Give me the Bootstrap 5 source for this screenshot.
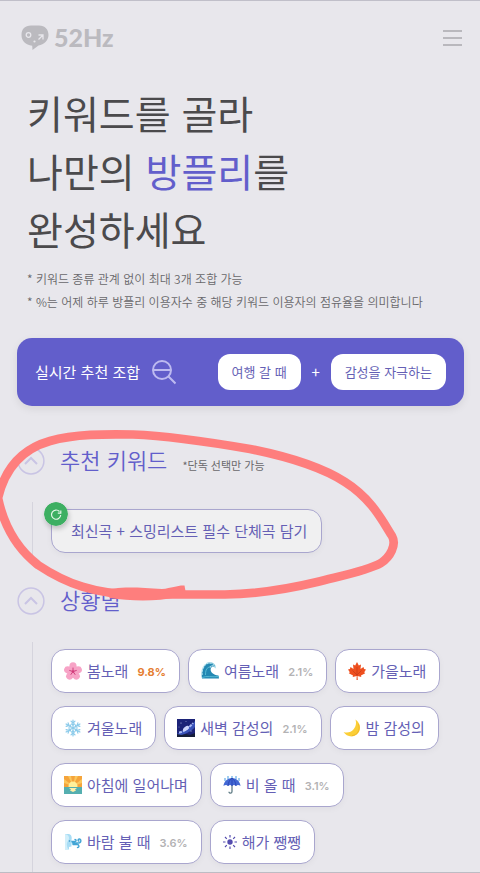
<!DOCTYPE html>
<html lang="ko">
<head>
<meta charset="utf-8">
<meta name="viewport" content="width=device-width, initial-scale=1">
<title>52Hz</title>
<link href="https://cdn.jsdelivr.net/npm/bootstrap@5.3.0/dist/css/bootstrap.min.css" rel="stylesheet">
<style>
:root { --brand: #625ecb; --chip-ink: #655fb5; }
html { overflow: hidden; }
body { background: #e8e7ec; color: #4b4a4c; font-family: "Noto Sans CJK KR", "Noto Sans", sans-serif; font-size: 15px; }
.page { position: relative; min-height: 100vh; border-top: 1px solid #c0bfc9; overflow: hidden; padding: 0 16px 8px 17px; }
.topbar { height: 73px; padding: 0; }
.brand-name { font: 900 25px/28px Lato, sans-serif; color: #bbbabf; padding: 0 0 2px 1px; }
.menu-btn { width: 22px; height: 24px; }
.headline { font-size: 39px; line-height: 58px; font-weight: 400; margin: 9px 0 10px 10px; color: #4b4a4c; }
.headline em { font-style: normal; color: var(--brand); }
.notes { font-size: 12px; line-height: 23px; font-weight: 350; color: #69686b; margin: 0 0 25px 10px; }
.combo { background: var(--brand); border-radius: 15px; padding: 16px 18px; box-shadow: 0 3px 8px #00000014; margin-bottom: 41px; color: #fff; }
.combo-title { font-size: 15px; line-height: 20px; }
.pill { height: 36px; border: 0; border-radius: 12px; background: #fff; color: var(--chip-ink); font-size: 13px; line-height: 20px; padding: 0 14px; }
.plus { width: 30px; text-align: center; }
.sect-head { height: 28px; margin-bottom: 27px; gap: 15px; }
.sect-head h2 { font-size: 22px; line-height: 26px; font-weight: 350; color: var(--brand); padding-bottom: 4px; }
.sect-head p { font-size: 11px; line-height: 20px; color: #69686b; padding-top: 7px; }
.fold { width: 28px; height: 28px; }
.sect-body { border-left: 1px solid #d5d4dd; margin-left: 15px; padding: 7px 0 9px 18px; margin-bottom: 25px; }
.chips { gap: 13px 8px; }
.chip { position: relative; height: 44px; border: 1px solid #a9a6ce; border-radius: 14px; background: #fff; color: var(--chip-ink); font-size: 15px; line-height: 22px; padding: 0 13px 1px 12px; box-shadow: 0 2px 6px #0000000a; white-space: nowrap; }
.chip svg { width: 18px; height: 18px; margin-right: 5px; flex: none; }
.chip .sun { width: 14px; }
.chip .share { font: 600 11px/22px Inter, sans-serif; color: #b3b2b4; margin-left: 9px; padding-top: 2px; }
.chip .share.hot { color: #e57e32; font-weight: 700; }
.chip-solo { background: #f0f0f1; padding: 0 14px 1px 19px; }
.chip-solo .refresh { position: absolute; left: -8px; top: -8px; width: 24px; height: 24px; margin: 0; border-radius: 50%; box-shadow: 1px 3px 5px #0003; }
.marker { position: absolute; left: 0; top: -1px; width: 480px; height: 640px; pointer-events: none; }
.baseline { position: fixed; left: 0; right: 0; bottom: 0; height: 1px; background: #bdbcc4; }
</style>
<script src="https://cdn.jsdelivr.net/npm/bootstrap@5.3.0/dist/js/bootstrap.bundle.min.js"></script>
</head>
<body>
<div class="page">
  <nav class="navbar topbar d-flex justify-content-between align-items-center flex-nowrap">
    <a href="#" class="d-flex align-items-center text-decoration-none ps-1" aria-label="52Hz">
      <svg class="me-1" width="28" height="26" viewBox="0 0 28 26" aria-hidden="true">
        <path d="M10 .5h8c6 0 9.500 4 9.500 9.500s-4.500 9.500-10 10.500L11.500 25l-.3-4.200C4.500 20 .5 16 .5 10S4 .5 10 .5z" fill="#bbbabf"/>
        <g fill="none" stroke="#e8e7ec" stroke-width="1.300"><circle cx="7.500" cy="10" r="2.300"/><path d="M17.500 10h4.500v4.500M22 10l-4.500 4.500"/></g><circle cx="13.500" cy="16.500" r="1.100" fill="#e8e7ec"/>
      </svg>
      <span class="brand-name">52Hz</span>
    </a>
    <button type="button" class="btn menu-btn p-0 border-0 d-flex align-items-center justify-content-center" aria-label="메뉴">
      <svg width="20" height="18" viewBox="0 0 20 18"><path d="M0 2h19M0 9h19M0 16h19" stroke="#b9b8bd" stroke-width="2"/></svg>
    </button>
  </nav>

  <main>
    <h1 class="headline">키워드를 골라<br>나만의 <em>방플리</em>를<br>완성하세요</h1>
    <p class="notes">* 키워드 종류 관계 없이 최대 3개 조합 가능<br>* %는 어제 하루 방플리 이용자수 중 해당 키워드 이용자의 점유율을 의미합니다</p>

    <section class="combo d-flex align-items-center">
      <span class="combo-title">실시간 추천 조합</span>
      <svg class="ms-2 me-auto" width="28" height="26" viewBox="-3 0 28 26" fill="none" stroke="#bdbaf0" stroke-width="2" aria-hidden="true"><circle cx="11" cy="11" r="9"/><path d="M2 11h18M17.500 17.500l7 7"/></svg>
      <button type="button" class="pill">여행 갈 때</button>
      <span class="plus">+</span>
      <button type="button" class="pill">감성을 자극하는</button>
    </section>

    <section>
      <div class="sect-head d-flex align-items-center">
        <button type="button" class="btn fold p-0 border-0 d-flex" aria-label="추천 키워드 접기"><svg width="28" height="28" viewBox="0 0 28 28" fill="none" stroke="#c9c4e4" stroke-width="1.500"><circle cx="14" cy="14" r="12.900"/><path d="M8 17l6-6 6 6" stroke-width="2"/></svg></button>
        <h2 class="m-0">추천 키워드</h2>
        <p class="m-0">*단독 선택만 가능</p>
      </div>
      <div class="sect-body d-flex">
        <button type="button" class="chip chip-solo">
          <svg class="refresh" viewBox="0 0 24 24" aria-hidden="true"><circle cx="12" cy="12" r="12" fill="#3daf62"/><path d="M15.500 9.500A4.600 4.600 0 1 0 16.700 13M16.800 8.500v2.700h-3" fill="none" stroke="#e5f6e9" stroke-width="1.200"/></svg>
          최신곡 + 스밍리스트 필수 단체곡 담기
        </button>
      </div>
    </section>

    <section>
      <div class="sect-head d-flex align-items-center">
        <button type="button" class="btn fold p-0 border-0 d-flex" aria-label="상황별 접기"><svg width="28" height="28" viewBox="0 0 28 28" fill="none" stroke="#c9c4e4" stroke-width="1.500"><circle cx="14" cy="14" r="12.900"/><path d="M8 17l6-6 6 6" stroke-width="2"/></svg></button>
        <h2 class="m-0">상황별</h2>
      </div>
      <div class="sect-body chips d-flex flex-wrap mb-0">
        <button type="button" class="chip d-flex align-items-center">
          <svg viewBox="0 0 18 18"><g fill="#f7a3c6"><ellipse cx="9" cy="4.500" rx="3.600" ry="4.200"/><ellipse cx="9" cy="4.500" rx="3.600" ry="4.200" transform="rotate(72 9 9.500)"/><ellipse cx="9" cy="4.500" rx="3.600" ry="4.200" transform="rotate(144 9 9.500)"/><ellipse cx="9" cy="4.500" rx="3.600" ry="4.200" transform="rotate(216 9 9.500)"/><ellipse cx="9" cy="4.500" rx="3.600" ry="4.200" transform="rotate(288 9 9.500)"/></g><path d="M9 9.500V6M9 9.500l3.300-1M9 9.500l2 2.900M9 9.500l-2 2.900M9 9.500L5.700 8.500" stroke="#d03f7c" stroke-width="1" stroke-linecap="round"/><circle cx="9" cy="9.500" r="1.300" fill="#d23b7a"/></svg>
          봄노래 <span class="share hot">9.8%</span></button>
        <button type="button" class="chip d-flex align-items-center">
          <svg viewBox="0 0 18 18"><path d="M1 16.500C-.5 9 3 1 8.500.6c4-.2 6 2 5.800 4.800-1.500-1.200-3.500-1-4.300.6-1.300 3 1 6.500 7.500 7.500l.5 3z" fill="#2388b3"/><path d="M1 13c-.5-5.500 2-11.500 7-12 3.500-.4 5.800 1.200 6.200 4-2-1.700-4.500-1.400-5.400.5" fill="none" stroke="#b7e3ee" stroke-width="1.400" stroke-dasharray="2.500 .6"/><path d="M4.500 13c0-4 .5-6.500 3.500-8M1 15.500c5-2 10 0 17-1" fill="none" stroke="#56bad4"/></svg>
          여름노래 <span class="share">2.1%</span></button>
        <button type="button" class="chip d-flex align-items-center">
          <svg viewBox="0 0 18 18"><path d="M9 0l1.800 3.500L13 2.500 12.500 7l3-2 .6 2 1.900.4-1.800 2.800 1 1-4.200 2.300.3 1.500L9.500 14l.3 4H8.500l.2-4-4 1 .3-1.500L.8 11.200l1-1L0 7.400 1.900 7l.6-2 3 2L5 2.500l2.200 1z" fill="#ee4f1e"/><path d="M9 14V5M9 13l4.500-4.500M9 13L4.500 8.500" fill="none" stroke="#c53a1a" stroke-width=".7"/></svg>
          가을노래</button>
        <button type="button" class="chip d-flex align-items-center">
          <svg viewBox="0 0 18 18" fill="none" stroke="#8ccbea" stroke-width="1.200" stroke-linecap="round"><path id="arm" d="M9 9V1M7 2.200l2 2L11 2.200M7.600 5l1.400 1.400L10.400 5"/><use href="#arm" transform="rotate(60 9 9)"/><use href="#arm" transform="rotate(120 9 9)"/><use href="#arm" transform="rotate(180 9 9)"/><use href="#arm" transform="rotate(240 9 9)"/><use href="#arm" transform="rotate(300 9 9)"/></svg>
          겨울노래</button>
        <button type="button" class="chip d-flex align-items-center">
          <svg viewBox="0 0 18 18"><path d="M0 0h18v18H0z" fill="#1c2378"/><path d="M0 15C5 13 13 8 18 2v6c-4 5-10 7-18 10z" fill="#3952b8"/><path d="M2 13.500C7 13 13 8 16 4" stroke="#a9b9f4" stroke-width="2" stroke-dasharray="3 1" fill="none"/><ellipse cx="9" cy="9.500" rx="3.500" ry="1.800" transform="rotate(-38 9 9.500)" fill="#ccd3fb"/><path d="M0 15l4 1 5-1 4 1 5-2v4H0z" fill="#151d39"/><g fill="#dce3ff"><circle cx="4" cy="4" r=".5"/><circle cx="9" cy="2.500" r=".4"/><circle cx="2" cy="8" r=".4"/><circle cx="14" cy="12" r=".5"/></g></svg>
          새벽 감성의 <span class="share">2.1%</span></button>
        <button type="button" class="chip d-flex align-items-center">
          <svg viewBox="0 0 18 18"><path d="M12.500.5c7 5 5.500 15-2.500 16.800C6 18 2.500 16 .6 13c3.500 1.300 7.500.5 10-2.700C13 7.500 13.500 4 12.500.5z" fill="#fbce36"/><path d="M15.500 5c2 6-1 11-6.500 11.700" fill="none" stroke="#f1b92b"/></svg>
          밤 감성의</button>
        <button type="button" class="chip d-flex align-items-center">
          <svg viewBox="0 0 18 18"><path d="M0 0h18v18H0z" fill="#f5a43b"/><path d="M9 10L0 3v4l9 3L4 0h3l2 10 2-10h3L9 10l9-7v4z" fill="#fbc75c"/><circle cx="9" cy="10" r="4.500" fill="#fff09a"/><path d="M0 11h18v7H0z" fill="#55afb0"/><path d="M5 12h8l-2 1.500 1 1-3 1.500-3-1.500 1-1z" fill="#fff0a8"/></svg>
          아침에 일어나며</button>
        <button type="button" class="chip d-flex align-items-center">
          <svg viewBox="0 0 18 18"><path d="M9 8v7.500c0 2.200-3 2.200-3 .2" fill="none" stroke="#617d86" stroke-width="1.300"/><path d="M9 2c5 .2 8 3.500 8.500 8-1.500-1.500-3.500-1.500-4.500 0-1.500-1.500-2.700-1.500-4 0-1.300-1.500-2.500-1.500-4 0-1-1.500-3-1.500-4.500 0C1 5.500 4 2.200 9 2z" fill="#4268d4"/><path d="M9 2C6.500 4 5.300 6.500 5 10M9 2c2.500 2 3.700 4.500 4 8M9 2v8" fill="none" stroke="#263fae" stroke-width=".8"/><path d="M5 0v3M9 0v2M13 0v3M2 2v3M16 2v3" stroke="#65aee8" stroke-width="1.200"/></svg>
          비 올 때 <span class="share">3.1%</span></button>
        <button type="button" class="chip d-flex align-items-center">
          <svg viewBox="0 0 18 18"><path d="M1 1h4c3 1 3 4 2.500 6L9 9.500 7.500 10v3.500L5 14v2.500H1z" fill="#a8ddf5"/><path d="M1 1c4 1 5 4 3 7s-1 5 0 8H1z" fill="#d2effa"/><circle cx="5.500" cy="8" r=".8" fill="#358fc3"/><path d="M8.500 10h6c3 0 3-4 .8-4-1.600 0-1.600 2-.3 2M9 11.500h4c2.500 0 2.500 3 .5 3M8 8.500h3c1.500 0 1.500-2 0-2" fill="none" stroke="#42a5d5" stroke-width="1.400" stroke-linecap="round"/></svg>
          바람 불 때 <span class="share">3.6%</span></button>
        <button type="button" class="chip d-flex align-items-center">
          <svg class="sun" viewBox="1 2 14 14"><circle cx="8" cy="9" r="2.700" fill="#554daf"/><path d="M8 2v2.500M8 13.500V16M1 9h2.500M12.500 9H15M3 4l1.800 1.800M11.200 12.200L13 14M3 14l1.800-1.800M11.200 5.800L13 4" stroke="#554daf" stroke-width="1.200"/></svg>
          해가 쨍쨍</button>
      </div>
    </section>
  </main>

  <svg class="marker" viewBox="0 0 480 640" aria-hidden="true">
    <path d="M-2 498C5 468 22 449 50 441C75 434 105 434 133 434.500C170 436 215 443 250 449C285 456 320 466 345 482C372 499 383 522 392 536C397 545 390 557 381 563C367 571 340 576 317 582C288 589 255 594 225 594.500H140C95 595 65 583 38 565C15 547 3 522-2 498z" fill="none" stroke="#fe7e7d" stroke-width="8.700" stroke-linejoin="round"/>
    <path d="M105 592C112 586 135 587 162 589C172 588 178 585 184.500 585.500L185.500 591L178 597C155 602 130 601 110 598z" fill="#fe7e7d"/>
  </svg>
</div>
<div class="baseline"></div>
</body>
</html>
